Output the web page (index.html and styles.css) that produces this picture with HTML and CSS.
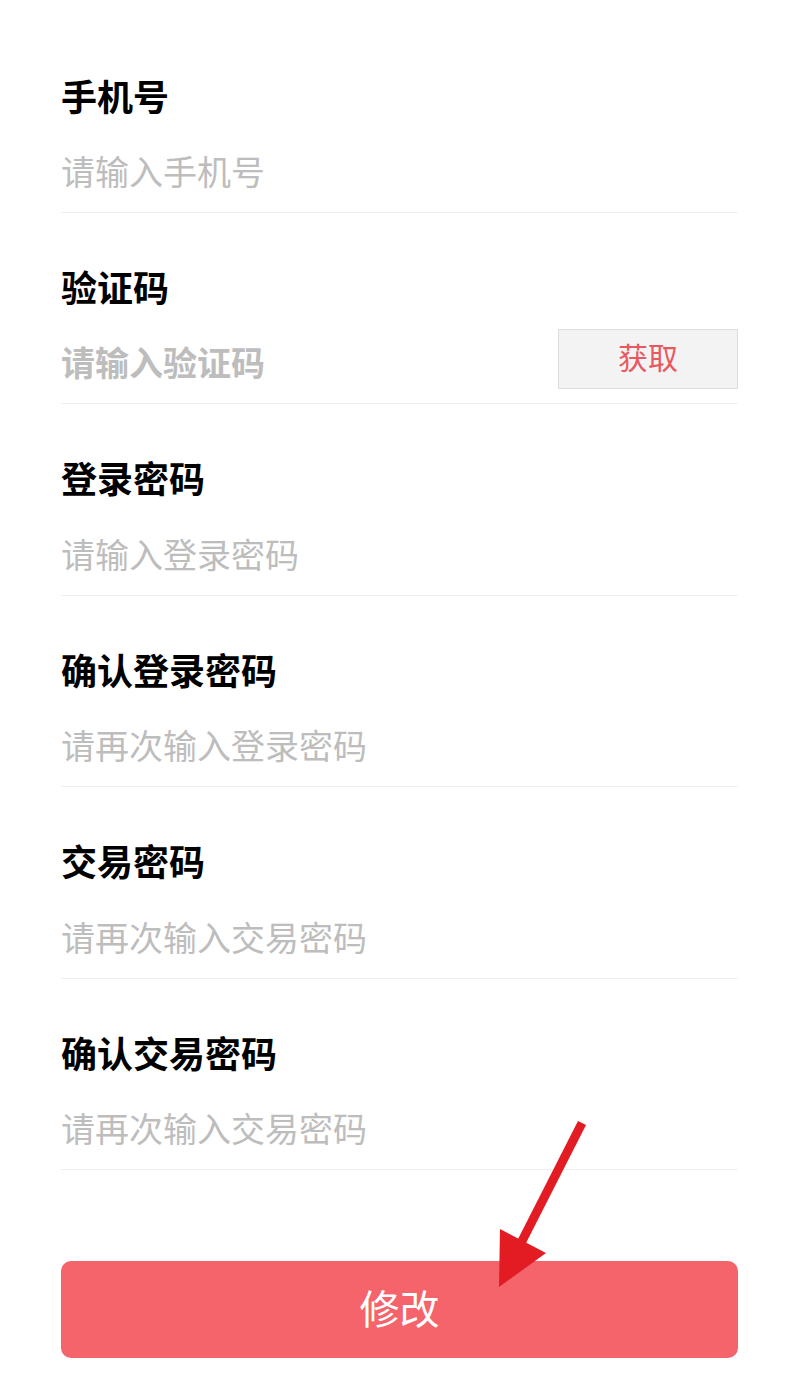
FILE: index.html
```html
<!DOCTYPE html>
<html lang="zh-CN">
<head>
<meta charset="utf-8">
<title>修改密码</title>
<link rel="stylesheet" href="styles.css">
</head>
<body>
<div class="page">
  <form class="form">
    <div class="field">
      <label class="label">手机号</label>
      <div class="row">
        <input class="input" type="tel" placeholder="请输入手机号">
      </div>
    </div>
    <div class="field">
      <label class="label">验证码</label>
      <div class="row">
        <input class="input input-bold" type="text" placeholder="请输入验证码">
        <button type="button" class="code-btn">获取</button>
      </div>
    </div>
    <div class="field">
      <label class="label">登录密码</label>
      <div class="row">
        <input class="input" type="password" placeholder="请输入登录密码">
      </div>
    </div>
    <div class="field">
      <label class="label">确认登录密码</label>
      <div class="row">
        <input class="input" type="password" placeholder="请再次输入登录密码">
      </div>
    </div>
    <div class="field">
      <label class="label">交易密码</label>
      <div class="row">
        <input class="input" type="password" placeholder="请再次输入交易密码">
      </div>
    </div>
    <div class="field">
      <label class="label">确认交易密码</label>
      <div class="row">
        <input class="input" type="password" placeholder="请再次输入交易密码">
      </div>
    </div>
    <button type="button" class="submit">修改</button>
  </form>
  <svg class="arrow" width="793" height="1378" viewBox="0 0 793 1378" aria-hidden="true">
    <line x1="582" y1="1123" x2="520" y2="1245" stroke="#e31b23" stroke-width="9" stroke-linecap="butt"/>
    <polygon points="500,1229 546,1253 499,1287" fill="#e31b23"/>
  </svg>
</div>
</body>
</html>
```
FILE: styles.css
```css
* {
  box-sizing: border-box;
}

html, body {
  margin: 0;
  padding: 0;
  background: #ffffff;
}

body {
  font-family: "Noto Sans CJK SC", "Noto Sans", sans-serif;
}

.page {
  position: relative;
  width: 793px;
  min-height: 1378px;
}

.form {
  display: flex;
  flex-direction: column;
  padding: 21.6px 55px 0 61px;
}

.field {
  display: flex;
  flex-direction: column;
  padding: 53px 0 20.9px;
  border-bottom: 1px solid #efefef;
}

.label {
  display: block;
  font-size: 36px;
  line-height: 40px;
  font-weight: 700;
  color: #000000;
  margin-bottom: 36.5px;
}

.row {
  display: flex;
  align-items: center;
  height: 40px;
}

.input {
  flex: 1;
  min-width: 0;
  height: 40px;
  padding: 0;
  border: none;
  outline: none;
  background: transparent;
  font-family: inherit;
  font-size: 34px;
  line-height: 40px;
  color: #333333;
}

.input::placeholder {
  color: #bdbdbd;
}

.input-bold,
.input-bold::placeholder {
  font-weight: 700;
}

.code-btn {
  flex: none;
  width: 180px;
  height: 60px;
  margin-bottom: 6px;
  padding: 0 0 6px;
  border: 1px solid #dddddd;
  background: #f3f3f3;
  color: #e9585f;
  font-family: inherit;
  font-size: 30px;
  line-height: 50px;
}

.submit {
  margin-top: 91px;
  height: 97px;
  border: none;
  border-radius: 10px;
  background: #f5636b;
  color: #ffffff;
  font-family: inherit;
  font-size: 40px;
  line-height: 90px;
  padding: 0 0 5px;
}

.arrow {
  position: absolute;
  left: 0;
  top: 0;
  pointer-events: none;
}
```
